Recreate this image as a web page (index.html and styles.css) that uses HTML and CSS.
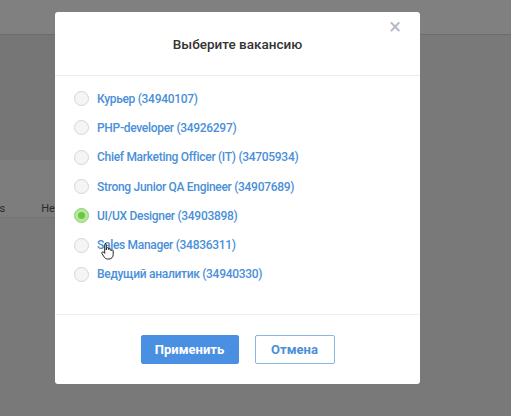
FILE: index.html
```html
<!DOCTYPE html>
<html>
<head>
    <title>Выберите вакансию</title>
    <link rel="stylesheet" href="styles.css">
</head>
<body>
    <div class="page">
        <div class="topbar"></div>
        <div class="content">
            <div class="left-panel">
                <div class="panel-top"></div>
                <div class="panel-tabs">
                    <span class="tab tab-first">Jobs</span>
                    <span class="tab">Head</span>
                </div>
            </div>
        </div>
    </div>

    <div class="overlay">
        <div class="modal">
            <div class="modal-header">
                <h2 class="modal-title">Выберите вакансию</h2>
                <span class="modal-close">&times;</span>
            </div>
            <ul class="vacancy-list">
                <li class="vacancy"><span class="radio"></span><span class="vacancy-name">Курьер (34940107)</span></li>
                <li class="vacancy"><span class="radio"></span><span class="vacancy-name">PHP-developer (34926297)</span></li>
                <li class="vacancy"><span class="radio"></span><span class="vacancy-name">Chief Marketing Officer (IT) (34705934)</span></li>
                <li class="vacancy"><span class="radio"></span><span class="vacancy-name">Strong Junior QA Engineer (34907689)</span></li>
                <li class="vacancy"><span class="radio checked"></span><span class="vacancy-name">UI/UX Designer (34903898)</span></li>
                <li class="vacancy"><span class="radio"></span><span class="vacancy-name">Sales Manager (34836311)</span>
                    <svg class="cursor" width="14" height="18" viewBox="0 0 14 18">
                        <path d="M4 1.5c.8 0 1.3.6 1.3 1.3V8l.1-1.2c.1-.7.6-1.1 1.2-1.1s1.1.5 1.1 1.2v.8c.1-.6.6-1 1.2-1s1.1.5 1.1 1.1v.9c.1-.5.5-.9 1.1-.9.6 0 1.1.5 1.1 1.1v3.6c0 2.6-1.7 4.5-4.3 4.5H6.6c-1.4 0-2.4-.6-3.2-1.7L1 11.7c-.4-.6-.3-1.3.2-1.6.5-.4 1.2-.3 1.6.2l.9 1.1V2.8c0-.7.5-1.3 1.3-1.3z" fill="#fff" stroke="#222" stroke-width="1"/>
                    </svg>
                </li>
                <li class="vacancy"><span class="radio"></span><span class="vacancy-name">Ведущий аналитик (34940330)</span></li>
            </ul>
            <div class="modal-footer">
                <button class="btn btn-primary">Применить</button>
                <button class="btn btn-secondary">Отмена</button>
            </div>
        </div>
    </div>
</body>
</html>
```

FILE: styles.css
```css
body {
    margin: 0;
    font-family: Roboto, "Open Sans", sans-serif;
    background: #797979;
}
.page {
    height: 416px;
    overflow: hidden;
}
.topbar {
    height: 34px;
    background: #808080;
    border-bottom: 1px solid #6c6c6c;
}
.left-panel {
    width: 300px;
}
.panel-top {
    height: 125px;
    background: #767676;
}
.panel-tabs {
    height: 58px;
    background: #7d7d7d;
    border-bottom: 1px solid #727272;
    display: flex;
    align-items: flex-end;
    box-sizing: border-box;
    font-size: 11px;
    color: #2a2a2a;
}
.tab {
    margin-left: 36px;
    line-height: 16px;
}
.tab-first {
    margin-left: -19px;
}
.overlay {
    position: absolute;
    top: 0;
    left: 0;
    right: 0;
    bottom: 0;
}
.modal {
    position: absolute;
    left: 55px;
    top: 12px;
    width: 365px;
    height: 372px;
    background: #fff;
    border-radius: 3px;
    display: flex;
    flex-direction: column;
}
.modal-header {
    height: 63px;
    border-bottom: 1px solid #e9ebef;
    position: relative;
    display: flex;
    align-items: center;
    justify-content: center;
}
.modal-title {
    margin: 0;
    font-size: 13.5px;
    font-weight: 500;
    color: #333;
}
.modal-close {
    position: absolute;
    right: 19px;
    top: 2px;
    font-size: 22px;
    color: #b4b7c6;
}
.vacancy-list {
    list-style: none;
    margin: 0;
    padding: 8px 0 0 19px;
    flex: 1;
    border-bottom: 1px solid #eef0f3;
}
.vacancy {
    display: flex;
    align-items: center;
    height: 29.3px;
    position: relative;
}
.radio {
    width: 13px;
    height: 13px;
    border: 1px solid #d6d6d6;
    border-radius: 50%;
    background: #f5f5f5;
    margin-right: 8px;
    box-sizing: content-box;
    position: relative;
}
.radio.checked {
    border-color: #8fd36e;
    background: #b7e6a0;
}
.radio.checked::after {
    content: "";
    position: absolute;
    left: 3px;
    top: 3px;
    width: 7px;
    height: 7px;
    border-radius: 50%;
    background: #6cc644;
}
.vacancy-name {
    font-size: 12px;
    font-weight: 500;
    letter-spacing: -0.3px;
    color: #4a8fd8;
}
.cursor {
    position: absolute;
    left: 27px;
    top: 12px;
}
.modal-footer {
    height: 69px;
    display: flex;
    justify-content: center;
    align-items: center;
    gap: 16px;
}
.btn {
    height: 29px;
    border-radius: 2px;
    font-family: inherit;
    font-size: 13px;
    font-weight: 700;
    cursor: pointer;
}
.btn-primary {
    width: 98px;
    background: #4a90e2;
    border: 1px solid #4a90e2;
    color: #fff;
}
.btn-secondary {
    width: 80px;
    background: #fff;
    border: 1px solid #8ab6e6;
    color: #4a8fd8;
}
```
